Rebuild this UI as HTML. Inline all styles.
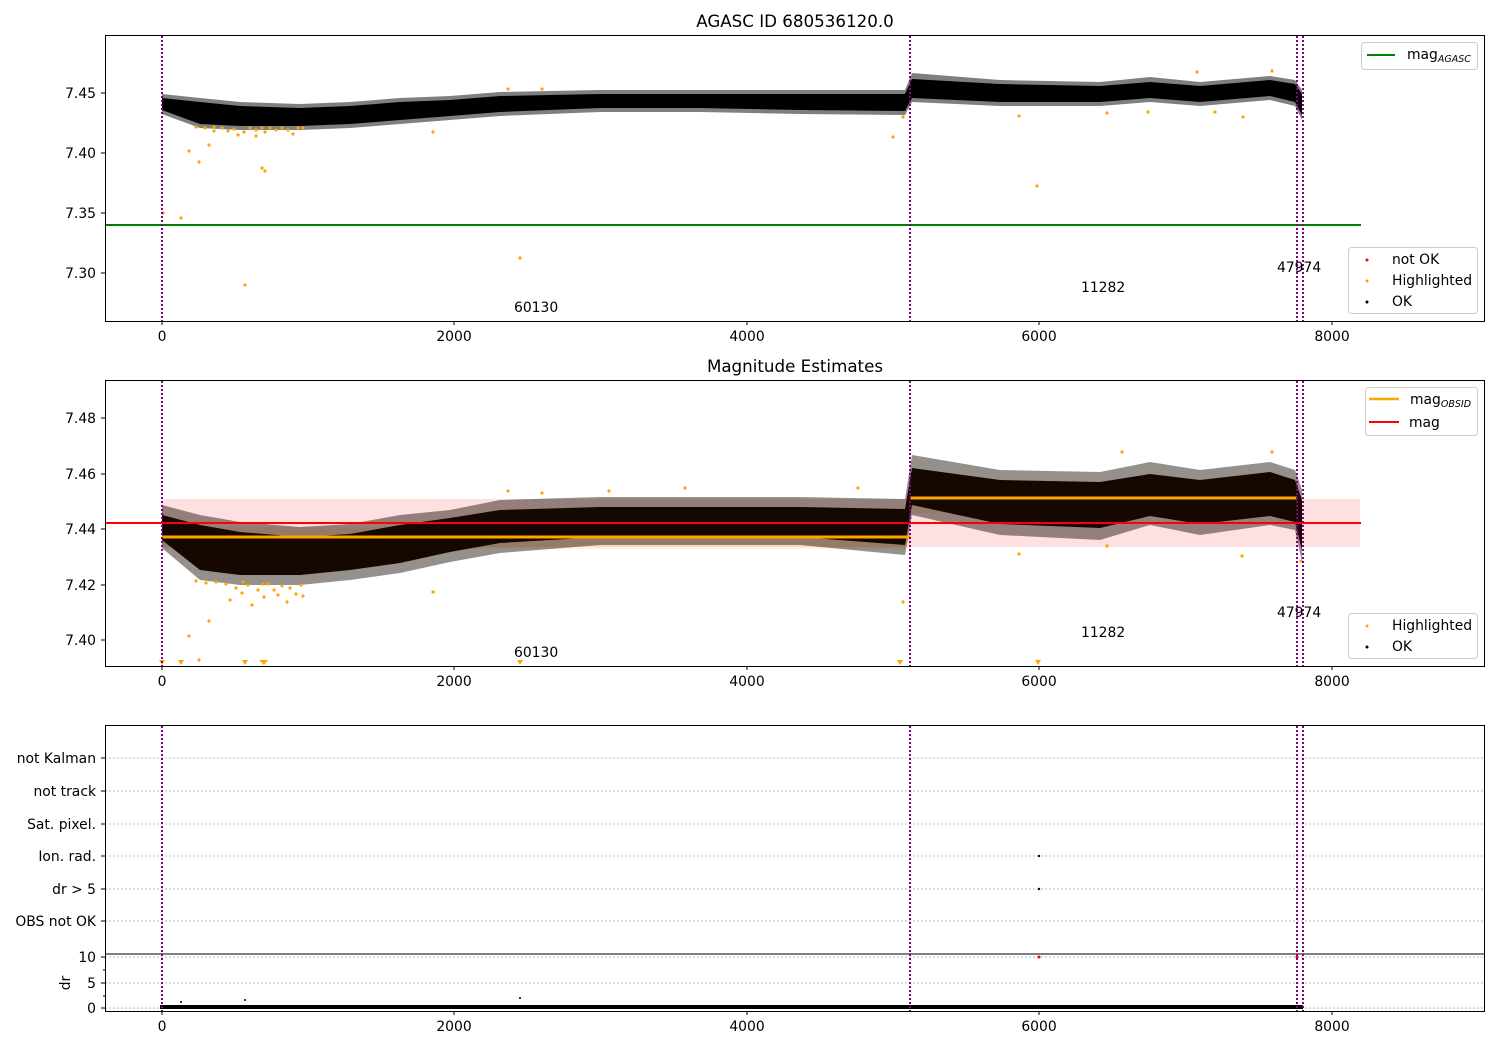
<!DOCTYPE html>
<html><head><meta charset="utf-8"><style>body{margin:0;background:#fff}svg{display:block;font-family:"DejaVu Sans","Liberation Sans",sans-serif}</style></head><body>
<svg width="1500" height="1050" viewBox="0 0 1500 1050" xmlns="http://www.w3.org/2000/svg">
<rect width="1500" height="1050" fill="#fff"/>
<!-- Panel 1 -->
<text x="795" y="27" font-size="16.7" text-anchor="middle">AGASC ID 680536120.0</text>
<line x1="105" y1="225" x2="1361" y2="225" stroke="green" stroke-width="2"/>
<polygon fill="#000" fill-opacity="0.5" points="162,94 200,98 240,102 300,104 350,102 400,98 450,96 500,92 600,90 700,90 800,90 905,90 912,73 1000,80 1100,82 1150,77 1200,82 1270,76 1295,80 1302,90 1302,120 1295,106 1270,100 1200,106 1150,102 1100,106 1000,106 912,102 905,115 800,114 700,112 600,112 500,116 450,120 400,124 350,128 300,130 240,130 200,128 162,114"/>
<polygon fill="#000" points="162,98 200,102 240,106 300,108 350,106 400,102 450,100 500,96 600,94 700,94 800,94 905,94 912,79 1000,84 1100,86 1150,82 1200,86 1270,80 1295,84 1302,94 1302,115 1295,102 1270,96 1200,102 1150,98 1100,102 1000,102 912,98 905,111 800,110 700,108 600,108 500,112 450,116 400,120 350,124 300,126 240,126 200,124 162,110"/>
<g fill="orange">
<circle cx="163" cy="213" r="1.6"/><circle cx="181" cy="218" r="1.6"/><circle cx="189" cy="151" r="1.6"/><circle cx="199" cy="162" r="1.6"/><circle cx="209" cy="145" r="1.6"/><circle cx="245" cy="285" r="1.6"/><circle cx="262" cy="168" r="1.6"/><circle cx="265" cy="171" r="1.6"/><circle cx="433" cy="132" r="1.6"/><circle cx="520" cy="258" r="1.6"/><circle cx="508" cy="89" r="1.6"/><circle cx="542" cy="89" r="1.6"/><circle cx="893" cy="137" r="1.6"/><circle cx="903" cy="117" r="1.6"/><circle cx="1037" cy="186" r="1.6"/><circle cx="1019" cy="116" r="1.6"/><circle cx="1107" cy="113" r="1.6"/><circle cx="1148" cy="112" r="1.6"/><circle cx="1215" cy="112" r="1.6"/><circle cx="1243" cy="117" r="1.6"/><circle cx="1197" cy="72" r="1.6"/><circle cx="1272" cy="71" r="1.6"/>
<circle cx="196" cy="127" r="1.6"/><circle cx="205" cy="128" r="1.6"/><circle cx="214" cy="127" r="1.6"/><circle cx="222" cy="128" r="1.6"/><circle cx="228" cy="131" r="1.6"/><circle cx="234" cy="129" r="1.6"/><circle cx="238" cy="135" r="1.6"/><circle cx="244" cy="132" r="1.6"/><circle cx="250" cy="128" r="1.6"/><circle cx="256" cy="130" r="1.6"/><circle cx="262" cy="128" r="1.6"/><circle cx="265" cy="132" r="1.6"/><circle cx="270" cy="128" r="1.6"/><circle cx="276" cy="130" r="1.6"/><circle cx="282" cy="128" r="1.6"/><circle cx="288" cy="130" r="1.6"/><circle cx="293" cy="134" r="1.6"/><circle cx="298" cy="128" r="1.6"/><circle cx="303" cy="128" r="1.6"/><circle cx="256" cy="136" r="1.6"/><circle cx="214" cy="131" r="1.6"/>
</g>
<g stroke="purple" stroke-width="2" stroke-dasharray="2,2"><line x1="162" y1="36" x2="162" y2="321"/><line x1="910" y1="36" x2="910" y2="321"/><line x1="1297" y1="36" x2="1297" y2="321"/><line x1="1303" y1="36" x2="1303" y2="321"/></g>
<g font-size="13.9"><text x="514" y="312">60130</text><text x="1081" y="292">11282</text><text x="1277" y="272">47974</text></g>
<rect x="105.5" y="35.5" width="1379" height="286" fill="none" stroke="#000"/>
<g font-size="13.9" text-anchor="end"><text x="96" y="98">7.45</text><text x="96" y="158">7.40</text><text x="96" y="218">7.35</text><text x="96" y="278">7.30</text></g>
<g stroke="#000"><line x1="101" y1="93" x2="105" y2="93"/><line x1="101" y1="153" x2="105" y2="153"/><line x1="101" y1="213" x2="105" y2="213"/><line x1="101" y1="273" x2="105" y2="273"/>
<line x1="162" y1="321" x2="162" y2="325"/><line x1="454" y1="321" x2="454" y2="325"/><line x1="747" y1="321" x2="747" y2="325"/><line x1="1039" y1="321" x2="1039" y2="325"/><line x1="1332" y1="321" x2="1332" y2="325"/></g>
<g font-size="13.9" text-anchor="middle"><text x="162" y="341">0</text><text x="454" y="341">2000</text><text x="747" y="341">4000</text><text x="1039" y="341">6000</text><text x="1332" y="341">8000</text></g>
<rect x="1361.5" y="42.5" width="116" height="27" rx="3" fill="#fff" stroke="#ccc"/>
<line x1="1367" y1="55" x2="1395" y2="55" stroke="green" stroke-width="2"/>
<text x="1407" y="59" font-size="13.9">mag<tspan font-size="9.5" font-style="italic" dy="3">AGASC</tspan></text>
<rect x="1348.5" y="247.5" width="129" height="66" rx="3" fill="#fff" stroke="#ccc"/>
<circle cx="1367" cy="260" r="1.5" fill="red"/><circle cx="1367" cy="281" r="1.5" fill="orange"/><circle cx="1367" cy="302" r="1.5" fill="#000"/>
<g font-size="13.9"><text x="1392" y="264">not OK</text><text x="1392" y="285">Highlighted</text><text x="1392" y="306">OK</text></g>

<!-- Panel 2 -->
<text x="795" y="372" font-size="16.7" text-anchor="middle">Magnitude Estimates</text>
<rect x="162" y="499" width="1198" height="48" fill="red" fill-opacity="0.12"/>
<rect x="162" y="527" width="748" height="22" fill="orange" fill-opacity="0.15"/>
<rect x="910" y="483" width="387" height="30" fill="orange" fill-opacity="0.15"/>
<polygon fill="#140800" fill-opacity="0.45" points="162,505 200,515 240,522 300,527 350,524 400,515 450,510 500,500 600,497 700,497 800,497 905,499 912,455 1000,470 1100,472 1150,462 1200,470 1270,462 1295,470 1302,490 1302,562 1295,530 1270,525 1200,535 1150,525 1100,540 1000,535 912,515 905,555 800,545 700,545 600,545 500,553 450,562 400,573 350,580 300,585 240,585 200,580 162,548"/>
<polygon fill="#140800" points="162,515 200,525 240,532 300,537 350,534 400,525 450,518 500,510 600,507 700,507 800,507 905,509 912,468 1000,480 1100,482 1150,474 1200,480 1270,472 1295,480 1302,500 1302,550 1295,522 1270,516 1200,524 1150,516 1100,528 1000,524 912,505 905,545 800,537 700,537 600,537 500,543 450,552 400,563 350,570 300,575 240,575 200,570 162,540"/>
<line x1="105" y1="523" x2="1361" y2="523" stroke="red" stroke-width="2"/>
<line x1="162" y1="537" x2="910" y2="537" stroke="orange" stroke-width="3"/>
<line x1="910" y1="498" x2="1297" y2="498" stroke="orange" stroke-width="3"/>
<g fill="orange">
<circle cx="189" cy="636" r="1.6"/><circle cx="199" cy="660" r="1.6"/><circle cx="209" cy="621" r="1.6"/><circle cx="433" cy="592" r="1.6"/><circle cx="508" cy="491" r="1.6"/><circle cx="542" cy="493" r="1.6"/><circle cx="609" cy="491" r="1.6"/><circle cx="685" cy="488" r="1.6"/><circle cx="858" cy="488" r="1.6"/><circle cx="903" cy="602" r="1.6"/><circle cx="1019" cy="554" r="1.6"/><circle cx="1107" cy="546" r="1.6"/><circle cx="1242" cy="556" r="1.6"/><circle cx="1122" cy="452" r="1.6"/><circle cx="1272" cy="452" r="1.6"/><circle cx="1301" cy="561" r="1.6"/>
<circle cx="196" cy="581" r="1.6"/><circle cx="206" cy="583" r="1.6"/><circle cx="216" cy="582" r="1.6"/><circle cx="226" cy="584" r="1.6"/><circle cx="230" cy="600" r="1.6"/><circle cx="236" cy="588" r="1.6"/><circle cx="242" cy="593" r="1.6"/><circle cx="248" cy="585" r="1.6"/><circle cx="252" cy="605" r="1.6"/><circle cx="258" cy="590" r="1.6"/><circle cx="264" cy="597" r="1.6"/><circle cx="268" cy="584" r="1.6"/><circle cx="274" cy="590" r="1.6"/><circle cx="278" cy="595" r="1.6"/><circle cx="282" cy="586" r="1.6"/><circle cx="287" cy="602" r="1.6"/><circle cx="290" cy="588" r="1.6"/><circle cx="296" cy="594" r="1.6"/><circle cx="301" cy="585" r="1.6"/><circle cx="303" cy="596" r="1.6"/><circle cx="243" cy="582" r="1.6"/><circle cx="263" cy="584" r="1.6"/>
<path d="M159,660 h6 l-3,5z M178,660 h6 l-3,5z M242,660 h6 l-3,5z M259,660 h9 l-4,5z M517,660 h6 l-3,5z M897,660 h6 l-3,5z M1035,660 h6 l-3,5z"/>
</g>
<g stroke="purple" stroke-width="2" stroke-dasharray="2,2"><line x1="162" y1="381" x2="162" y2="666"/><line x1="910" y1="381" x2="910" y2="666"/><line x1="1297" y1="381" x2="1297" y2="666"/><line x1="1303" y1="381" x2="1303" y2="666"/></g>
<g font-size="13.9"><text x="514" y="657">60130</text><text x="1081" y="637">11282</text><text x="1277" y="617">47974</text></g>
<rect x="105.5" y="380.5" width="1379" height="286" fill="none" stroke="#000"/>
<g font-size="13.9" text-anchor="end"><text x="96" y="423">7.48</text><text x="96" y="479">7.46</text><text x="96" y="534">7.44</text><text x="96" y="590">7.42</text><text x="96" y="645">7.40</text></g>
<g stroke="#000"><line x1="101" y1="418" x2="105" y2="418"/><line x1="101" y1="474" x2="105" y2="474"/><line x1="101" y1="529" x2="105" y2="529"/><line x1="101" y1="585" x2="105" y2="585"/><line x1="101" y1="640" x2="105" y2="640"/>
<line x1="162" y1="666" x2="162" y2="670"/><line x1="454" y1="666" x2="454" y2="670"/><line x1="747" y1="666" x2="747" y2="670"/><line x1="1039" y1="666" x2="1039" y2="670"/><line x1="1332" y1="666" x2="1332" y2="670"/></g>
<g font-size="13.9" text-anchor="middle"><text x="162" y="686">0</text><text x="454" y="686">2000</text><text x="747" y="686">4000</text><text x="1039" y="686">6000</text><text x="1332" y="686">8000</text></g>
<rect x="1365.5" y="387.5" width="112" height="48" rx="3" fill="#fff" stroke="#ccc"/>
<line x1="1369" y1="399" x2="1399" y2="399" stroke="orange" stroke-width="2.5"/>
<line x1="1369" y1="422" x2="1399" y2="422" stroke="red" stroke-width="2"/>
<text x="1410" y="404" font-size="13.9">mag<tspan font-size="9.5" font-style="italic" dy="3">OBSID</tspan></text>
<text x="1409" y="427" font-size="13.9">mag</text>
<rect x="1348.5" y="613.5" width="129" height="45" rx="3" fill="#fff" stroke="#ccc"/>
<circle cx="1367" cy="626" r="1.5" fill="orange"/><circle cx="1367" cy="647" r="1.5" fill="#000"/>
<g font-size="13.9"><text x="1392" y="630">Highlighted</text><text x="1392" y="651">OK</text></g>

<!-- Panel 3 -->
<g stroke="#bbb" stroke-dasharray="2,2" stroke-width="1"><line x1="105" y1="758" x2="1485" y2="758"/><line x1="105" y1="791" x2="1485" y2="791"/><line x1="105" y1="824" x2="1485" y2="824"/><line x1="105" y1="856" x2="1485" y2="856"/><line x1="105" y1="889" x2="1485" y2="889"/><line x1="105" y1="921" x2="1485" y2="921"/><line x1="105" y1="957" x2="1485" y2="957"/><line x1="105" y1="983" x2="1485" y2="983"/><line x1="105" y1="1008" x2="1485" y2="1008"/></g>
<line x1="105" y1="954" x2="1485" y2="954" stroke="#000"/>
<rect x="160" y="1005" width="1143" height="4" fill="#000"/>
<circle cx="1039" cy="856" r="1.2"/><circle cx="1039" cy="889" r="1.2"/><circle cx="1039" cy="957" r="1.5" fill="red"/><circle cx="1297" cy="957" r="1.5" fill="red"/><circle cx="245" cy="1000" r="1"/><circle cx="520" cy="998" r="1"/><circle cx="181" cy="1002" r="1"/>
<g stroke="purple" stroke-width="2" stroke-dasharray="2,2"><line x1="162" y1="726" x2="162" y2="1011"/><line x1="910" y1="726" x2="910" y2="1011"/><line x1="1297" y1="726" x2="1297" y2="1011"/><line x1="1303" y1="726" x2="1303" y2="1011"/></g>
<rect x="105.5" y="725.5" width="1379" height="286" fill="none" stroke="#000"/>
<g font-size="13.9" text-anchor="end"><text x="96" y="763">not Kalman</text><text x="96" y="796">not track</text><text x="96" y="829">Sat. pixel.</text><text x="96" y="861">Ion. rad.</text><text x="96" y="894">dr &gt; 5</text><text x="96" y="926">OBS not OK</text><text x="96" y="962">10</text><text x="96" y="988">5</text><text x="96" y="1013">0</text></g>
<text transform="translate(70,983) rotate(-90)" font-size="13.9" text-anchor="middle">dr</text>
<g stroke="#000"><line x1="101" y1="758" x2="105" y2="758"/><line x1="101" y1="791" x2="105" y2="791"/><line x1="101" y1="824" x2="105" y2="824"/><line x1="101" y1="856" x2="105" y2="856"/><line x1="101" y1="889" x2="105" y2="889"/><line x1="101" y1="921" x2="105" y2="921"/><line x1="101" y1="957" x2="105" y2="957"/><line x1="101" y1="983" x2="105" y2="983"/><line x1="101" y1="1008" x2="105" y2="1008"/><line x1="103" y1="970" x2="105" y2="970"/><line x1="103" y1="996" x2="105" y2="996"/>
<line x1="162" y1="1011" x2="162" y2="1015"/><line x1="454" y1="1011" x2="454" y2="1015"/><line x1="747" y1="1011" x2="747" y2="1015"/><line x1="1039" y1="1011" x2="1039" y2="1015"/><line x1="1332" y1="1011" x2="1332" y2="1015"/></g>
<g font-size="13.9" text-anchor="middle"><text x="162" y="1031">0</text><text x="454" y="1031">2000</text><text x="747" y="1031">4000</text><text x="1039" y="1031">6000</text><text x="1332" y="1031">8000</text></g>
</svg>
</body></html>
